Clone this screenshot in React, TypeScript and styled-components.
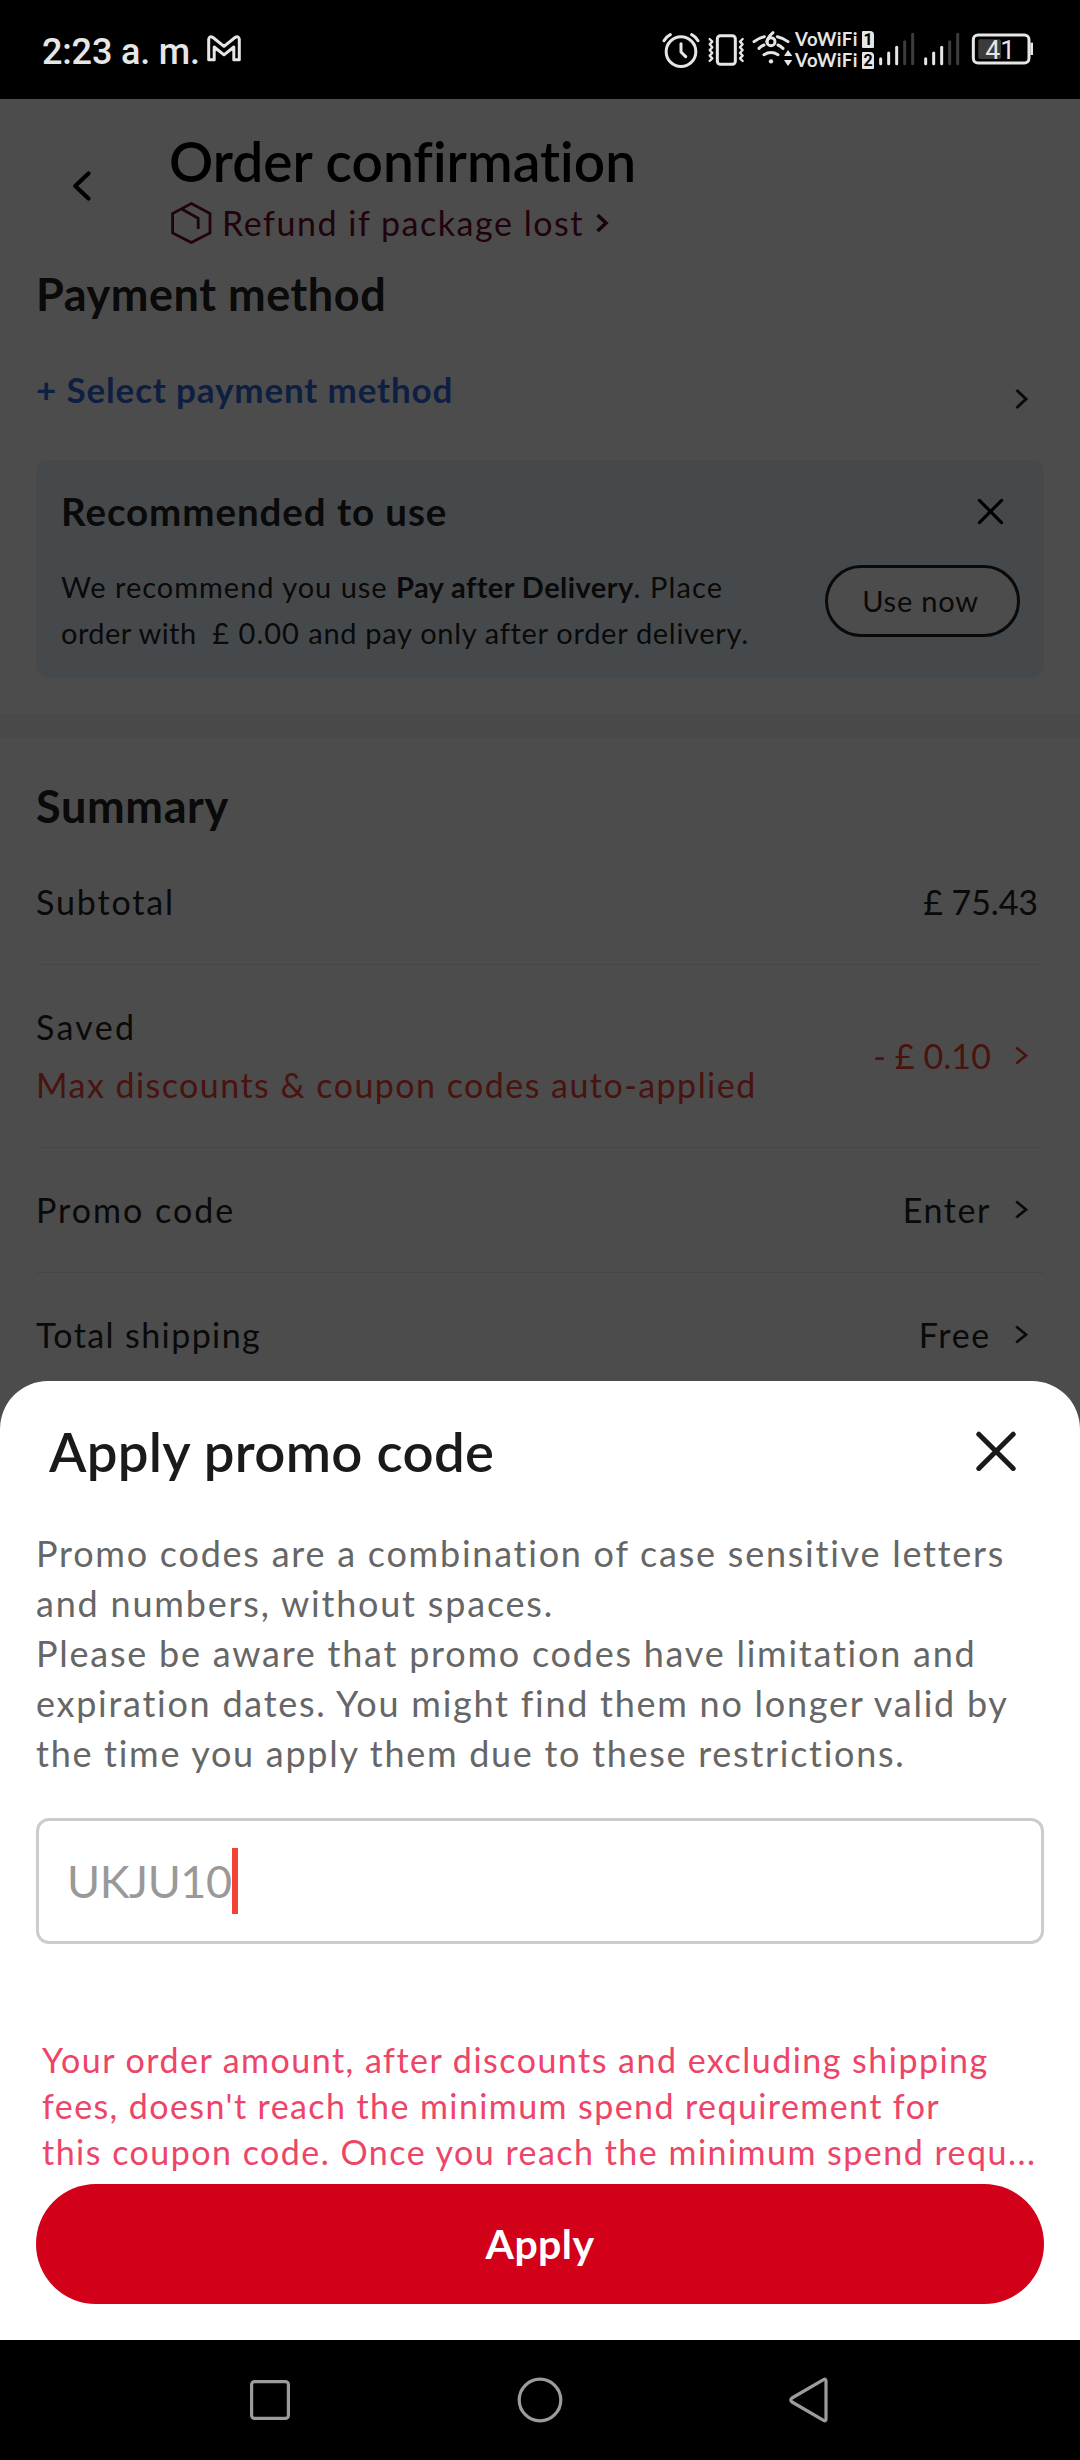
import React from "react";
import styled, { createGlobalStyle } from "styled-components";

const GlobalStyle = createGlobalStyle`
  * { box-sizing: border-box; }
  body { margin: 0; background: #000; font-family: Lato, "Open Sans", sans-serif; font-kerning: normal; }
`;

const Screen = styled.div`
  width: 1080px;
  height: 2460px;
  display: flex;
  flex-direction: column;
  overflow: hidden;
  background: #000;
`;

/* ---------- text ---------- */

const Text = styled.span<{
  $size: number;
  $line: number;
  $track?: number;
  $weight?: number;
  $color?: string;
}>`
  display: block;
  white-space: pre;
  font-size: ${(p) => p.$size}px;
  line-height: ${(p) => p.$line}px;
  letter-spacing: ${(p) => p.$track ?? 0}px;
  font-weight: ${(p) => p.$weight ?? 400};
  color: ${(p) => p.$color ?? "#222"};
`;

/* ---------- status bar ---------- */

const StatusBar = styled.div`
  flex: none;
  height: 99px;
  padding: 0 46px 0 42px;
  display: flex;
  align-items: center;
  justify-content: space-between;
  color: #e6e6e6;
`;

const Clock = styled.div`
  display: flex;
  align-items: center;
  gap: 7px;
  font: 500 36px/44px Roboto, sans-serif;
  letter-spacing: -0.17px;
  white-space: pre;
  padding-top: 4px;
`;

const MailIcon = styled.svg`
  margin-bottom: 7px;
`;

const StatusIcons = styled.div`
  display: flex;
  align-items: center;
  height: 44px;
`;

const StatusIcon = styled.svg<{ $gap?: number }>`
  display: block;
  flex: none;
  height: 44px;
  margin-left: ${(p) => p.$gap ?? 0}px;
  fill: none;
  stroke: #e6e6e6;
  stroke-width: 9;
  stroke-linecap: round;
  stroke-linejoin: round;
`;

const Carriers = styled.div`
  width: 84px;
  padding-left: 1px;
  display: flex;
  flex-direction: column;
  gap: 4px;
`;

const Carrier = styled.div`
  display: flex;
  align-items: center;
  justify-content: space-between;
  height: 17px;
  width: 79px;
  font: 700 18.5px/17px Lato, sans-serif;
  letter-spacing: 0.5px;
`;

const SimBadge = styled.span`
  width: 12px;
  height: 17px;
  border-radius: 1px 4px 1px 1px;
  background: #e6e6e6;
  color: #000;
  font: 700 16px/17px Roboto, sans-serif;
  letter-spacing: 0;
  text-align: center;
`;

function Signal({ gap }: { gap?: number }) {
  const tops = [176, 159, 142, 125, 103];
  return (
    <StatusIcon $gap={gap} width={37} viewBox="714 84 111 132" strokeWidth={8}>
      {tops.map((top, i) => (
        <path key={top} d={`M${722 + i * 24} ${top}V191`} stroke={i > 2 ? "#3c3c3c" : "#e6e6e6"} />
      ))}
    </StatusIcon>
  );
}

/* ---------- page below the sheet ---------- */

const Body = styled.div`
  position: relative;
  flex: none;
  height: 2241px;
  overflow: hidden;
  background: #fff;
`;

const Header = styled.header`
  display: flex;
  padding: 29px 36px 20px 70px;
  height: 167px;
`;

const BackButton = styled.div`
  width: 99px;
  padding-top: 41px;
`;

const RefundLink = styled.div`
  display: flex;
  align-items: center;
  height: 44px;
  margin: 7px 0 0 2px;
  color: #6b0a28;
`;

const RefundText = styled(Text)`
  margin: 0 11px 0 10px;
`;

const Section = styled.section`
  padding: 0 36px;
`;

const SelectRow = styled.div`
  display: flex;
  justify-content: space-between;
  align-items: flex-start;
  height: 64px;
  margin-top: 45px;
  padding-right: 14px;
`;

const Chevron = styled.svg`
  display: block;
  flex: none;
  fill: none;
  stroke: currentColor;
`;

const SelectChevron = styled(Chevron)`
  align-self: center;
  color: #222;
`;

const Notice = styled.div`
  height: 218px;
  margin-top: 29px;
  padding: 27px 24px 0 25px;
  border-radius: 12px;
  background: #ecf6fc;
`;

const NoticeHead = styled.div`
  display: flex;
  align-items: center;
  justify-content: space-between;
  padding-right: 16px;
  height: 48px;
`;

const NoticeMain = styled.div`
  display: flex;
  align-items: flex-start;
  justify-content: space-between;
  margin-top: 29px;
`;

const Line = styled.div`
  display: flex;
  height: 45.6px;
`;

const PillButton = styled.div`
  width: 195px;
  height: 72px;
  margin-top: 1px;
  border: 3px solid #222;
  border-radius: 36px;
  background: #fff;
  display: flex;
  align-items: center;
  justify-content: center;
  padding-right: 4px;
`;

const Band = styled.div`
  height: 24px;
  margin-top: 36px;
  background: #f3f3f3;
`;

const SummaryTitle = styled(Text)`
  padding: 40px 0 6px 0;
`;

const Row = styled.div`
  display: flex;
  align-items: center;
  justify-content: space-between;
  padding: 40px 0;
  border-bottom: 1px solid #eaeaea;
`;

const Labels = styled.div`
  display: flex;
  flex-direction: column;
  gap: 14px;
`;

const Value = styled.div<{ $color?: string }>`
  display: flex;
  align-items: center;
  gap: 23px;
  padding-right: 16px;
  color: ${(p) => p.$color ?? "#222"};
`;

const PlainValue = styled(Value)`
  padding-right: 6px;
`;

function RowChevron() {
  return (
    <Chevron width={14} height={20} viewBox="0 0 14 20" strokeWidth={2.6}>
      <path d="M2.2 1.6L12 9.6L2.2 17.6" />
    </Chevron>
  );
}

/* ---------- sheet ---------- */

const Scrim = styled.div`
  position: absolute;
  inset: 0;
  display: flex;
  flex-direction: column;
  justify-content: flex-end;
  background: rgba(0, 0, 0, 0.7);
`;

const Sheet = styled.div`
  height: 959px;
  padding: 38px 36px 36px;
  border-radius: 48px 48px 0 0;
  background: #fff;
  display: flex;
  flex-direction: column;
`;

const SheetHead = styled.div`
  display: flex;
  align-items: center;
  justify-content: space-between;
  height: 64px;
  padding: 0 28px 0 13px;
`;

const Paragraph = styled.div`
  margin-top: 45px;
`;

const Field = styled.div`
  height: 126px;
  margin-top: 40px;
  flex: none;
  padding-left: 28px;
  border: 3px solid #ccc;
  border-radius: 13px;
  display: flex;
  align-items: center;
`;

const Caret = styled.span`
  width: 6px;
  height: 66px;
  background: #f44336;
`;

const ErrorText = styled.div`
  margin-top: 93px;
  padding-left: 6px;
`;

const ApplyButton = styled.div`
  margin-top: auto;
  height: 120px;
  flex: none;
  border-radius: 60px;
  background: #d20019;
  display: flex;
  align-items: center;
  justify-content: center;
`;

/* ---------- navigation bar ---------- */

const NavBar = styled.nav`
  flex: none;
  height: 120px;
  padding: 0 135px;
  display: grid;
  grid-template-columns: repeat(3, 270px);
  place-items: center;
`;

const NavIcon = styled.svg`
  display: block;
  fill: none;
  stroke: #9c9c9c;
  stroke-width: 3.2;
  stroke-linejoin: round;
`;

const RED = "#f44336";

const paragraph: [string, number][] = [
  ["Promo codes are a combination of case sensitive letters", 1.76],
  ["and numbers, without spaces.", 1.8],
  ["Please be aware that promo codes have limitation and", 1.76],
  ["expiration dates. You might find them no longer valid by", 1.74],
  ["the time you apply them due to these restrictions.", 1.72],
];

const errorLines: [string, number][] = [
  ["Your order amount, after discounts and excluding shipping", 1.48],
  ["fees, doesn't reach the minimum spend requirement for", 1.41],
  ["this coupon code. Once you reach the minimum spend requ...", 1.48],
];

export default function App() {
  return (
    <Screen>
      <GlobalStyle />
      <StatusBar>
        <Clock>
          <span>2:23 a. m.</span>
          <MailIcon width="34" height="27" viewBox="0 0 34 27" fill="none" stroke="#e6e6e6" strokeWidth="3" strokeLinejoin="round">
            <path d="M1.7 4V24.7H7.2V12L17 19.8L26.8 12V24.7H32.3V4Q31.5 0.5 28 2.5L17 11.3L6 2.5Q2.5 0.5 1.7 4Z" />
          </MailIcon>
        </Clock>
        <StatusIcons>
          <StatusIcon width={38} viewBox="66 84 114 132">
            <circle cx="123" cy="155" r="44.5" />
            <path d="M123 131V156L137 170M72 122Q79 110 91 104M174 122Q167 110 155 104" />
          </StatusIcon>
          <StatusIcon $gap={7} width={38} viewBox="201 84 114 132">
            <rect x="232" y="107" width="54" height="86" rx="9" />
            <path strokeWidth="7" d="M209 117L217 125L209 133L217 142L209 150L217 159L209 167L217 175L209 183M308 117L300 125L308 133L300 142L308 150L300 159L308 167L300 175L308 183" />
          </StatusIcon>
          <StatusIcon $gap={7} width={42} viewBox="336 84 126 132" strokeWidth={7}>
            <path d="M342 125Q356 114 373 110M412 110Q430 114 444 125M357 145Q364 138 372 135M414 135Q422 138 429 145M372 164Q393 151 414 164" />
            <path d="M399 98Q383 112 381 125" />
            <circle cx="393" cy="125" r="12" />
            <circle cx="393" cy="184" r="6.5" fill="#e6e6e6" stroke="none" />
            <path d="M432 168L444 150L457 168ZM432 180H457L444 198Z" fill="#e6e6e6" stroke="none" />
          </StatusIcon>
          <Carriers>
            <Carrier>
              VoWiFi<SimBadge>1</SimBadge>
            </Carrier>
            <Carrier>
              VoWiFi<SimBadge>2</SimBadge>
            </Carrier>
          </Carriers>
          <Signal />
          <Signal gap={8} />
          <StatusIcon $gap={11} width={63} viewBox="993 84 189 132">
            <rect x="1000" y="105" width="167" height="84" rx="14" />
            <rect x="1015" y="118" width="68" height="59" rx="5" fill="#3c3c3c" stroke="none" />
            <path d="M1171 128H1179V165H1171Z" fill="#e6e6e6" stroke="none" />
            <text x="1081" y="177" fontFamily="Roboto" fontSize="80" textAnchor="middle" fill="#e6e6e6" stroke="none">
              41
            </text>
          </StatusIcon>
        </StatusIcons>
      </StatusBar>

      <Body>
        <Header>
          <BackButton>
            <Chevron width="24" height="34" viewBox="0 0 24 34" strokeWidth="4.2" strokeLinecap="round" strokeLinejoin="round" color="#000">
              <path d="M18.5 4.5L5.2 17L18.5 29.5" />
            </Chevron>
          </BackButton>
          <div>
            <Text $size={55} $line={66} $weight={600} $track={0.05} $color="#000">
              Order confirmation
            </Text>
            <RefundLink>
              <svg width="41" height="42" viewBox="0 0 41 42" fill="none" stroke="currentColor" strokeWidth="2.8">
                <path d="M20.3 1.6L39 11.6V31L20.3 40.6L1.6 31V11.6Z" />
                <path d="M10.7 7L27.2 16.4V27" />
              </svg>
              <RefundText $size={34} $line={44} $track={1.53} $color="#6b0a28">
                Refund if package lost
              </RefundText>
              <Chevron width="15" height="20" viewBox="0 0 15 20" strokeWidth="3.6" color="#4d0a20">
                <path d="M2.5 2L11 10L2.5 18" />
              </Chevron>
            </RefundLink>
          </div>
        </Header>

        <Section>
          <Text $size={45} $line={56} $weight={700} $track={0.55}>
            Payment method
          </Text>
          <SelectRow>
            <Text $size={35} $line={44} $weight={700} $track={0.85} $color="#3068dc">
              + Select payment method
            </Text>
            <SelectChevron width="16" height="22" viewBox="0 0 16 22" strokeWidth="3">
              <path d="M2.5 2L12 11L2.5 20" />
            </SelectChevron>
          </SelectRow>

          <Notice>
            <NoticeHead>
              <Text $size={38.5} $line={48} $weight={700} $track={0.93}>
                Recommended to use
              </Text>
              <Chevron width="27" height="27" viewBox="0 0 27 27" strokeWidth="3.2" strokeLinecap="round" color="#000">
                <path d="M2.4 2.4L24.6 24.6M24.6 2.4L2.4 24.6" />
              </Chevron>
            </NoticeHead>
            <NoticeMain>
              <div>
                <Line>
                  <Text $size={29} $line={45.6} $track={0.97}>{"We recommend you use "}</Text>
                  <Text $size={29} $line={45.6} $weight={700} $track={0.42}>Pay after Delivery</Text>
                  <Text $size={29} $line={45.6} $track={1.1}>. Place</Text>
                </Line>
                <Line>
                  <Text $size={29} $line={45.6} $track={0.45}>{"order with  "}</Text>
                  <Text $size={29} $line={45.6} $track={1}>{"£ 0.00 "}</Text>
                  <Text $size={29} $line={45.6} $track={0.7}>and pay only after order delivery.</Text>
                </Line>
              </div>
              <PillButton>
                <Text $size={29} $line={40} $track={0.78}>Use now</Text>
              </PillButton>
            </NoticeMain>
          </Notice>
        </Section>

        <Band />

        <Section>
          <SummaryTitle $size={45} $line={56} $weight={700} $track={0.65}>Summary</SummaryTitle>
          <Row>
            <Labels>
              <Text $size={34} $line={44} $track={1.85}>Subtotal</Text>
            </Labels>
            <PlainValue>
              <Text $size={34} $line={44} $track={-0.1}>£ 75.43</Text>
            </PlainValue>
          </Row>
          <Row>
            <Labels>
              <Text $size={34} $line={44} $track={2.3}>Saved</Text>
              <Text $size={34} $line={44} $track={1.46} $color={RED}>
                Max discounts &amp; coupon codes auto-applied
              </Text>
            </Labels>
            <Value $color={RED}>
              <Text $size={34} $line={44} $track={0.1} $color={RED}>- £ 0.10</Text>
              <RowChevron />
            </Value>
          </Row>
          <Row>
            <Labels>
              <Text $size={34} $line={44} $track={2}>Promo code</Text>
            </Labels>
            <Value>
              <Text $size={34} $line={44} $track={1.6}>Enter</Text>
              <RowChevron />
            </Value>
          </Row>
          <Row>
            <Labels>
              <Text $size={34} $line={44} $track={1.4}>Total shipping</Text>
            </Labels>
            <Value>
              <Text $size={34} $line={44} $track={1.7}>Free</Text>
              <RowChevron />
            </Value>
          </Row>
        </Section>

        <Scrim>
          <Sheet>
            <SheetHead>
              <Text $size={54.5} $line={64} $weight={600} $track={0.32} $color="#1a1a1a">
                Apply promo code
              </Text>
              <Chevron width="40" height="40" viewBox="0 0 40 40" strokeWidth="5" strokeLinecap="round" color="#1a1a1a">
                <path d="M2.8 3.2L37.2 37.6M37.2 3.2L2.8 37.6" />
              </Chevron>
            </SheetHead>
            <Paragraph>
              {paragraph.map(([line, track]) => (
                <Text key={line} $size={36} $line={50} $track={track} $color="#666">{line}</Text>
              ))}
            </Paragraph>
            <Field>
              <Text $size={45} $line={60} $track={-0.42} $color="#999">UKJU10</Text>
              <Caret />
            </Field>
            <ErrorText>
              {errorLines.map(([line, track]) => (
                <Text key={line} $size={34} $line={46} $track={track} $color="#ee4467">{line}</Text>
              ))}
            </ErrorText>
            <ApplyButton>
              <Text $size={41} $line={50} $weight={700} $track={0.4} $color="#fff">Apply</Text>
            </ApplyButton>
          </Sheet>
        </Scrim>
      </Body>

      <NavBar>
        <NavIcon width="50" height="50" viewBox="0 0 50 50">
          <rect x="6.6" y="6.6" width="36.8" height="36.8" rx="3" />
        </NavIcon>
        <NavIcon width="50" height="50" viewBox="0 0 50 50">
          <circle cx="25" cy="25" r="20.8" />
        </NavIcon>
        <NavIcon width="50" height="50" viewBox="0 0 50 50">
          <path d="M39 4.4Q41 3.6 41 6V44Q41 46.4 39 45.6L7 27Q4.4 25 7 23Z" />
        </NavIcon>
      </NavBar>
    </Screen>
  );
}
